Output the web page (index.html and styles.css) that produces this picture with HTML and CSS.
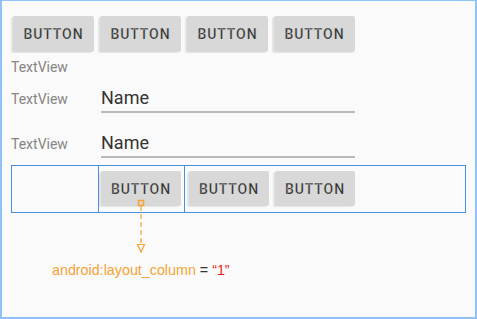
FILE: index.html
```html
<!DOCTYPE html>
<html lang="en">
<head>
    <meta charset="UTF-8">
    <meta name="viewport" content="width=device-width, initial-scale=1.0">
    <title>TableLayout column</title>
    <link rel="stylesheet" href="styles.css">
</head>
<body>
    <div class="frame">
        <div class="button-row">
            <div class="btn">BUTTON</div>
            <div class="btn">BUTTON</div>
            <div class="btn">BUTTON</div>
            <div class="btn">BUTTON</div>
        </div>

        <div class="label solo">TextView</div>

        <div class="field-row">
            <span class="label">TextView</span>
            <div class="edit">Name</div>
        </div>
        <div class="field-row second">
            <span class="label">TextView</span>
            <div class="edit">Name</div>
        </div>

        <div class="table-row">
            <div class="cell empty"></div>
            <div class="cell first">
                <div class="btn">BUTTON</div>
            </div>
            <div class="cell rest">
                <div class="btn">BUTTON</div>
                <div class="btn">BUTTON</div>
            </div>
        </div>

        <!-- annotation pointing from the column-1 button to the caption -->
        <svg class="connector" width="12" height="58" viewBox="0 0 12 58">
            <rect x="3.5" y="2.5" width="5" height="5" fill="none" stroke="#f5a336" stroke-width="1.5"/>
            <line x1="6" y1="8" x2="6" y2="46" stroke="#f5a336" stroke-width="1.2" stroke-dasharray="5 3"/>
            <polygon points="2.5,46.5 9.5,46.5 6,54" fill="#fafafa" stroke="#f5a336" stroke-width="1.2"/>
        </svg>

        <div class="caption">
            <span class="attr">android:layout_column</span> = <span class="value">&ldquo;1&rdquo;</span>
        </div>
    </div>
</body>
</html>
```

FILE: styles.css
```css
body {
    margin: 0;
    background-color: #fafafa;
    font-family: Roboto, 'Noto Sans', sans-serif;
}
.frame {
    position: relative;
    width: 477px;
    height: 319px;
    box-sizing: border-box;
    border: 2px solid #8fc2f6;
    border-top-width: 1px;
    background-color: #fafafa;
    padding: 15px 9px 0 9px;
}
.button-row {
    display: flex;
    gap: 6px;
    padding-left: 2px;
}
.btn {
    width: 81px;
    height: 36px;
    display: flex;
    justify-content: center;
    align-items: center;
    background-color: #d7d8d7;
    border-radius: 2px;
    box-shadow: -2px 1px 1px rgba(0, 0, 0, 0.09);
    color: #2e2e2e;
    font-size: 14px;
    font-weight: 500;
    letter-spacing: 0.9px;
    -webkit-text-stroke: 0.25px #d7d8d7;
}
.label {
    font-size: 14px;
    line-height: 16px;
    color: #858585;
}
.solo {
    margin-top: 7px;
}
.field-row {
    display: flex;
    align-items: baseline;
    margin-top: 12px;
}
.field-row.second {
    margin-top: 19px;
}
.field-row .label {
    width: 90px;
}
.edit {
    width: 254px;
    font-size: 18px;
    line-height: 22px;
    color: #333;
    padding-bottom: 2px;
    border-bottom: 2px solid #b9b9b9;
}
.table-row {
    display: flex;
    height: 48px;
    box-sizing: border-box;
    margin-top: 7px;
    width: 455px;
    border: 1px solid #4a8fe0;
}
.cell {
    display: flex;
    gap: 6px;
    padding: 5px 0 0 3px;
}
.cell.empty {
    width: 86px;
    padding: 0;
}
.cell.first {
    width: 83px;
    border-left: 1px solid #4a8fe0;
    padding-left: 2px;
}
.cell.first .btn {
    width: 80px;
}
.cell.rest {
    border-left: 1px solid #4a8fe0;
    padding-left: 4px;
}
.cell.rest .btn {
    width: 80px;
}
.table-row .btn {
    height: 35px;
}
.connector {
    position: absolute;
    left: 133px;
    top: 197px;
}
.caption {
    margin: 49px 0 0 41px;
    font-family: 'Liberation Sans', Arial, sans-serif;
    font-size: 14.3px;
    line-height: 16px;
    color: #333;
}
.attr {
    color: #f5a336;
}
.value {
    color: #f01c1c;
}
```
